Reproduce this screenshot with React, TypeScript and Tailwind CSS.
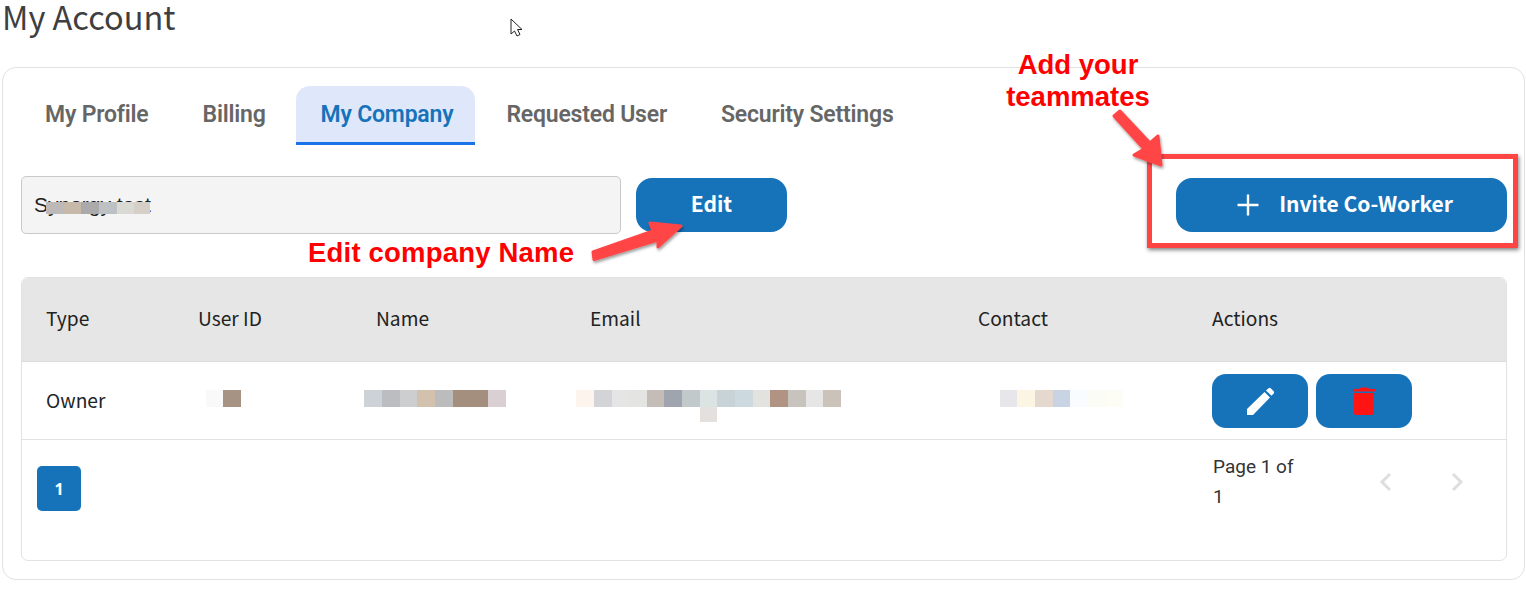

const Blur = ({ cells, className = "" }: { cells: [number, string][]; className?: string }) => (
  <div className={`flex h-[17px] ${className}`}>
    {cells.map(([w, c], i) => (
      <div key={i} className="h-full" style={{ width: w, background: c }} />
    ))}
  </div>
);

const tabs = ["My Profile", "Billing", "My Company", "Requested User", "Security Settings"];

function ArrowShadow() {
  return (
    <filter id="ds" x="-30%" y="-30%" width="170%" height="170%">
      <feDropShadow dx="1" dy="2" stdDeviation="1.5" floodColor="#000" floodOpacity="0.4" />
    </filter>
  );
}

export default function App() {
  return (
    <div className="relative h-[600px] w-[1526px] overflow-hidden bg-white font-['Noto_Sans_CJK_JP',sans-serif] text-[#212529]">
      <h1 className="ml-[2px] h-[67px] text-[32.5px] leading-[32px] text-[#3f3f3f]">My Account</h1>

      <div className="ml-[2px] h-[513px] w-[1523px] rounded-[14px] border border-[#e2e2e2] pl-[18px] pt-[18px]">
        <div className="-ml-px flex h-[59px] gap-[4px] font-['Roboto',sans-serif] text-[23px] font-semibold tracking-[-0.2px] text-[#666666]">
          {tabs.map((t, i) => (
            <div
              key={t}
              className={
                i === 2
                  ? "ml-px mr-[2px] flex h-[59px] items-center rounded-t-[14px] border-b-[3px] border-[#1a73e8] bg-[#dee8fa] pl-[25px] pr-[22px] pt-[2px] text-[#1673b9]"
                  : "flex h-[59px] items-center border-b-[3px] border-transparent px-[25px] pt-[2px]"
              }
            >
              {t}
            </div>
          ))}
        </div>

        <div className="mt-[31px] flex h-[58px] w-[1486px] items-start">
          <div className="relative flex h-[58px] w-[600px] items-center rounded-[5px] border border-[#c9c9c9] bg-[#f4f4f4] pl-[12px] font-['Liberation_Sans',sans-serif] text-[21px] text-[#222222]">
            Synergy test
            <div className="absolute left-[24px] top-[25px]">
              <Blur
                className="!h-[12px]"
                cells={[[18, "#bdb9b9"], [17, "#c7b9aa"], [18, "#aaaaaa"], [18, "#bec1c3"], [17, "#dadad4"], [16, "#d6cfc7"]]}
              />
            </div>
          </div>
          <button className="ml-[15px] mt-[2px] h-[54px] w-[151px] rounded-[16px] bg-[#1673b9] pb-[2px] text-[21px] font-bold text-white">
            Edit
          </button>
          <button className="ml-auto mt-[2px] flex h-[54px] w-[331px] items-center justify-center rounded-[16px] bg-[#1673b9] pl-[6px] text-[21px] font-bold text-white">
            <svg className="mr-[19px]" width="24" height="24" viewBox="0 0 24 24" fill="none" stroke="white" strokeWidth="2.4">
              <path d="M12 1.500v21M1.500 12h21" />
            </svg>
            <span className="pb-[2px]">Invite Co-Worker</span>
          </button>
        </div>

        <div className="mt-[43px] h-[284px] w-[1486px] overflow-hidden rounded-[7px] border border-[#e2e2e2] text-[19.2px]">
          <div className="grid h-[84px] grid-cols-[152px_178px_214px_388px_234px_1fr] items-center border-b border-[#dcdcdc] bg-[#e6e6e6] pb-[2px] pl-[24px] text-[#222222]">
            <div>Type</div>
            <div>User ID</div>
            <div>Name</div>
            <div>Email</div>
            <div>Contact</div>
            <div>Actions</div>
          </div>
          <div className="grid h-[78px] grid-cols-[152px_178px_214px_388px_234px_1fr] items-center border-b border-[#e2e2e2] pl-[24px]">
            <div>Owner</div>
            <div className="-mt-[4px]">
              <Blur className="ml-[8px]" cells={[[17, "#f9f9f9"], [18, "#a79383"]]} />
            </div>
            <div className="-mt-[4px]">
              <Blur className="-ml-[12px]" cells={[[18, "#cdd2d9"], [18, "#bcbdc0"], [17, "#cdcecf"], [18, "#d2c2ad"], [18, "#bcbcbc"], [35, "#a48f7f"], [18, "#dacfd3"]]} />
            </div>
            <div className="-mt-[4px]">
              <Blur className="-ml-[14px]" cells={[[18, "#fcf4ed"], [18, "#d3d4d8"], [17, "#e5e5e5"], [18, "#e4e4e2"], [17, "#c4bcb7"], [18, "#a0a4ae"], [18, "#c1c9cb"], [17, "#dce3e3"], [18, "#c7d3d7"], [18, "#ccd9de"], [17, "#e2e2de"], [18, "#b09382"], [18, "#c8c3bc"], [17, "#e6e6e6"], [18, "#cbc3b9"]]} />
              <div className="relative left-[110px] -mb-[15px] h-[15px] w-[17px] bg-[#e3e0dd]" />
            </div>
            <div className="-mt-[4px]">
              <Blur className="ml-[22px]" cells={[[17, "#e7e7eb"], [18, "#fdf5e3"], [18, "#e5d8ce"], [17, "#c8d4e3"], [18, "#f8fcff"], [18, "#fcfcf6"], [17, "#fdfdf5"]]} />
            </div>
            <div className="flex gap-[8px]">
              <button className="flex h-[54px] w-[96px] items-center justify-center rounded-[14px] bg-[#1673b9]">
                <svg width="30" height="30" viewBox="0 0 30 30" fill="white">
                  <path d="M2 29v-6L19.500 6l5.500 5.500L8 29z" />
                  <path d="M21 4.500 23.500 2.300q1.200-.9 2.200 0l3 3q.8 1 0 2.200L26.500 9.700z" />
                </svg>
              </button>
              <button className="flex h-[54px] w-[96px] items-center justify-center rounded-[14px] bg-[#1673b9]">
                <svg width="24" height="28" viewBox="0 0 24 28" fill="#ff1414">
                  <path d="M6.500 2q1-1.500 3-1.500h5q2 0 3 1.500zM1 2h22v2.500H1zM2 6h19.500v20q0 2-2 2H4q-2 0-2-2z" />
                </svg>
              </button>
            </div>
          </div>
          <div className="flex h-[120px] items-start pl-[15px]">
            <div className="mt-[26px] flex h-[45px] w-[44px] items-center justify-center rounded-[5px] bg-[#1673b9] font-['Noto_Sans',sans-serif] text-[16px] font-bold text-white">1</div>
            <div className="ml-[1132px] mt-[12px] w-[110px] font-['Roboto',sans-serif] text-[19px] leading-[30px] text-[#333333]">
              Page 1 of
              <br />1
            </div>
            <div className="ml-[56px] mt-[32px] flex gap-[57px]">
              <svg width="14" height="20" viewBox="0 0 14 20" fill="none" stroke="#dedede" strokeWidth="3"><path d="M11 2 3 10l8 8" /></svg>
              <svg width="14" height="20" viewBox="0 0 14 20" fill="none" stroke="#dedede" strokeWidth="3"><path d="m3 2 8 8-8 8" /></svg>
            </div>
          </div>
        </div>
      </div>

      {/* screenshot annotations */}
      <div className="absolute left-[990px] top-[49px] w-[176px] text-center font-['Liberation_Sans',sans-serif] text-[27.5px] font-bold leading-[32px] text-[#ff0000]">
        Add your teammates
      </div>
      <div className="absolute left-[308px] top-[237px] font-['Liberation_Sans',sans-serif] text-[27.5px] font-bold leading-[32px] tracking-[0.2px] text-[#ff0000]">
        Edit company Name
      </div>
      <div className="absolute left-[1147px] top-[154px] h-[94px] w-[371px] border-[5px] border-[#ff4444] shadow-[1px_2px_4px_rgba(0,0,0,0.5)]" />
      <svg className="absolute left-0 top-0" width="1526" height="600" fill="none">
        <defs><ArrowShadow /></defs>
        <g filter="url(#ds)" fill="#ff4444">
          <path d="M594 259.500 658 240 658 247 681 226 650 223 653 231 593 252 Z" stroke="#ff4444" strokeWidth="3" strokeLinejoin="round" />
          <path d="M1114 116 1144 149 1134 155 1161 165 1158 136 1150 143 1120 111 Z" stroke="#ff4444" strokeWidth="3" strokeLinejoin="round" />
        </g>
        <path d="M511 19v15l3.500-3 2.500 5 3-1.500-2.500-5h4.500z" fill="white" stroke="#222" strokeWidth="1" />
      </svg>
    </div>
  );
}
